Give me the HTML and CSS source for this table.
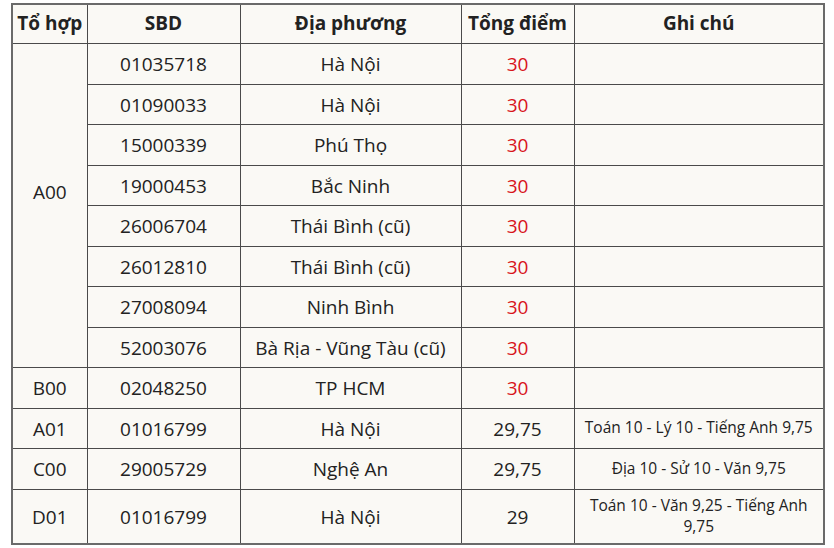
FILE: index.html
```html
<!DOCTYPE html>
<html lang="vi">
<head>
<meta charset="utf-8">
<link rel="stylesheet" href="styles.css">
</head>
<body>
<table class="scores">
  <colgroup>
    <col class="c1"><col class="c2"><col class="c3"><col class="c4"><col class="c5">
  </colgroup>
  <thead>
    <tr><th>Tổ hợp</th><th>SBD</th><th>Địa phương</th><th>Tổng điểm</th><th>Ghi chú</th></tr>
  </thead>
  <tbody>
    <tr><td rowspan="8" class="group">A00</td><td>01035718</td><td>Hà Nội</td><td class="red">30</td><td></td></tr>
    <tr><td>01090033</td><td>Hà Nội</td><td class="red">30</td><td></td></tr>
    <tr><td>15000339</td><td>Phú Thọ</td><td class="red">30</td><td></td></tr>
    <tr><td>19000453</td><td>Bắc Ninh</td><td class="red">30</td><td></td></tr>
    <tr><td>26006704</td><td>Thái Bình (cũ)</td><td class="red">30</td><td></td></tr>
    <tr><td>26012810</td><td>Thái Bình (cũ)</td><td class="red">30</td><td></td></tr>
    <tr><td>27008094</td><td>Ninh Bình</td><td class="red">30</td><td></td></tr>
    <tr><td>52003076</td><td>Bà Rịa - Vũng Tàu (cũ)</td><td class="red">30</td><td></td></tr>
    <tr><td>B00</td><td>02048250</td><td>TP HCM</td><td class="red">30</td><td></td></tr>
    <tr><td>A01</td><td>01016799</td><td>Hà Nội</td><td>29,75</td><td class="note">Toán 10 - Lý 10 - Tiếng Anh 9,75</td></tr>
    <tr><td>C00</td><td>29005729</td><td>Nghệ An</td><td>29,75</td><td class="note">Địa 10 - Sử 10 - Văn 9,75</td></tr>
    <tr class="last"><td>D01</td><td>01016799</td><td>Hà Nội</td><td>29</td><td class="note">Toán 10 - Văn 9,25 - Tiếng Anh<br>9,75</td></tr>
  </tbody>
</table>
</body>
</html>
```

FILE: styles.css
```css
html, body {
  margin: 0;
  padding: 0;
  background: #ffffff;
}

.scores {
  margin: 3px 0 0 11px;
  width: 812px;
  table-layout: fixed;
  border-collapse: collapse;
  background: #faf9f5;
  border: 2px solid #6a6a6a;
  font-family: "Open Sans", "Noto Sans", sans-serif;
  font-size: 19px;
  color: #222222;
}

.c1 { width: 75px; }
.c2 { width: 153px; }
.c3 { width: 221px; }
.c4 { width: 113px; }
.c5 { width: 250px; }

.scores th,
.scores td {
  border: 1px solid #4a4a4a;
  text-align: center;
  vertical-align: middle;
  padding: 0;
  line-height: 1.2;
}

.scores th {
  font-weight: 700;
  height: 36px;
  padding-bottom: 2px;
}

.scores tbody tr {
  height: 40.5px;
}

.scores tbody tr.last {
  height: 55px;
}

.scores td {
  padding-top: 2px;
}

.scores td.group {
  padding-top: 0;
  padding-bottom: 26px;
}

.red {
  color: #d8131b;
}

.scores td.note {
  font-size: 15.5px;
  line-height: 1.4;
  padding-top: 0;
}
```
